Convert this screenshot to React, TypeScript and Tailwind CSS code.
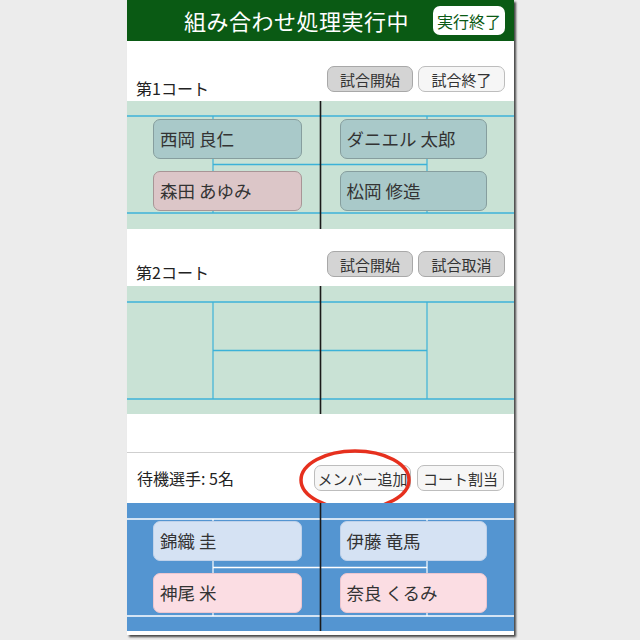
import React from "react";

type Player = { name: string; tone: "teal" | "pink" | "blue" | "rose" };

const cardTone: Record<Player["tone"], string> = {
  teal: "bg-[#a9c9c9] border-[#869e9e]",
  pink: "bg-[#dcc6c8] border-[#a89596]",
  blue: "bg-[#d5e2f3] border-[#c0d2ea]",
  rose: "bg-[#fbdde3] border-[#ecc6cf]",
};

function CourtLines({ color, top, bottom }: { color: string; top: number; bottom: number }) {
  const mid = (top + bottom) / 2;
  return (
    <svg className="absolute inset-0 h-full w-full" viewBox="0 0 387 128" preserveAspectRatio="none">
      <line x1="0" y1={top} x2="387" y2={top} stroke={color} strokeWidth="1.5" />
      <line x1="0" y1={bottom} x2="387" y2={bottom} stroke={color} strokeWidth="1.5" />
      <line x1="86" y1={top} x2="86" y2={bottom} stroke={color} strokeWidth="1.2" />
      <line x1="300" y1={top} x2="300" y2={bottom} stroke={color} strokeWidth="1.2" />
      <line x1="86" y1={mid} x2="300" y2={mid} stroke={color} strokeWidth="1.5" />
      <line x1="193.5" y1="0" x2="193.5" y2="128" stroke="#1a1a1a" strokeWidth="1.6" />
    </svg>
  );
}

function Court({ bg, line, top, bottom, players }: { bg: string; line: string; top: number; bottom: number; players?: Player[] }) {
  return (
    <div className={`relative h-[128px] ${bg}`}>
      <CourtLines color={line} top={top} bottom={bottom} />
      {players && (
        <div className="relative grid h-full grid-cols-2 grid-rows-2 gap-y-[12px] py-[18px]">
          {players.map((p, i) => (
            <div key={i} className={i % 2 === 0 ? "pl-[26px] pr-[19px]" : "pl-[19px] pr-[27px]"}>
              <div className={`flex h-full items-center rounded-[7px] border px-[6px] text-[17.5px] text-[#333] ${cardTone[p.tone]}`}>
                {p.name}
              </div>
            </div>
          ))}
        </div>
      )}
    </div>
  );
}

function Btn({ label, dark }: { label: string; dark?: boolean }) {
  return (
    <button
      className={`h-[26px] w-full rounded-[7px] border text-[15px] leading-none text-[#333] ${
        dark ? "border-[#a8a8a8] bg-[#d4d4d4]" : "border-[#bdbdbd] bg-[#f6f6f6]"
      }`}
    >
      {label}
    </button>
  );
}

export default function App() {
  return (
    <div
      className="h-[640px] w-[640px] overflow-hidden bg-[#ececec]"
      style={{ fontFamily: '"Noto Sans CJK JP", "Noto Sans", sans-serif' }}
    >
      <div className="ml-[127px] h-[635px] w-[387px] bg-white shadow-[2px_2px_2px_rgba(0,0,0,0.7)]">
        <header className="flex h-[41px] items-center bg-[#0a5a14] pr-[9px]">
          <h1 className="ml-[57px] flex-1 text-[22px] font-normal tracking-[0.5px] text-white">組み合わせ処理実行中</h1>
          <button className="h-[29px] w-[72px] rounded-[7px] bg-white text-[16px] leading-none text-[#0a5a14]">実行終了</button>
        </header>

        <div className="flex h-[60px] items-end justify-between pl-[9px] pr-[9px]">
          <span className="pb-[3px] text-[16px] leading-[20px] text-[#222]">第1コート</span>
          <div className="mb-[9px] flex gap-[5px]">
            <div className="w-[86px]"><Btn label="試合開始" dark /></div>
            <div className="w-[87px]"><Btn label="試合終了" /></div>
          </div>
        </div>
        <Court
          bg="bg-[#c9e2d5]"
          line="#3cb2d8"
          top={15}
          bottom={112}
          players={[
            { name: "西岡 良仁", tone: "teal" },
            { name: "ダニエル 太郎", tone: "teal" },
            { name: "森田 あゆみ", tone: "pink" },
            { name: "松岡 修造", tone: "teal" },
          ]}
        />

        <div className="flex h-[57px] items-end justify-between pl-[9px] pr-[9px]">
          <span className="pb-[4px] text-[16px] leading-[20px] text-[#222]">第2コート</span>
          <div className="mb-[9px] flex gap-[5px]">
            <div className="w-[86px]"><Btn label="試合開始" dark /></div>
            <div className="w-[87px]"><Btn label="試合取消" dark /></div>
          </div>
        </div>
        <Court bg="bg-[#c9e2d5]" line="#3cb2d8" top={16} bottom={113} />

        <div className="h-[39px] border-b border-[#cfcfcf]" />
        <div className="flex h-[50px] items-center justify-between pl-[10px] pr-[10px]">
          <span className="text-[16px] text-[#222]">待機選手: 5名</span>
          <div className="flex gap-[6px]">
            <div className="relative w-[97px]">
              <Btn label="メンバー追加" />
              <svg className="pointer-events-none absolute left-[-16px] top-[-17px] h-[64px] w-[114px]" viewBox="0 0 114 64">
                <ellipse cx="57" cy="32" rx="54" ry="29" fill="none" stroke="#e6301e" strokeWidth="3.5" />
              </svg>
            </div>
            <div className="w-[87px]"><Btn label="コート割当" /></div>
          </div>
        </div>
        <Court
          bg="bg-[#5495d1]"
          line="#ffffff"
          top={16}
          bottom={113}
          players={[
            { name: "錦織 圭", tone: "blue" },
            { name: "伊藤 竜馬", tone: "blue" },
            { name: "神尾 米", tone: "rose" },
            { name: "奈良 くるみ", tone: "rose" },
          ]}
        />
      </div>
    </div>
  );
}
